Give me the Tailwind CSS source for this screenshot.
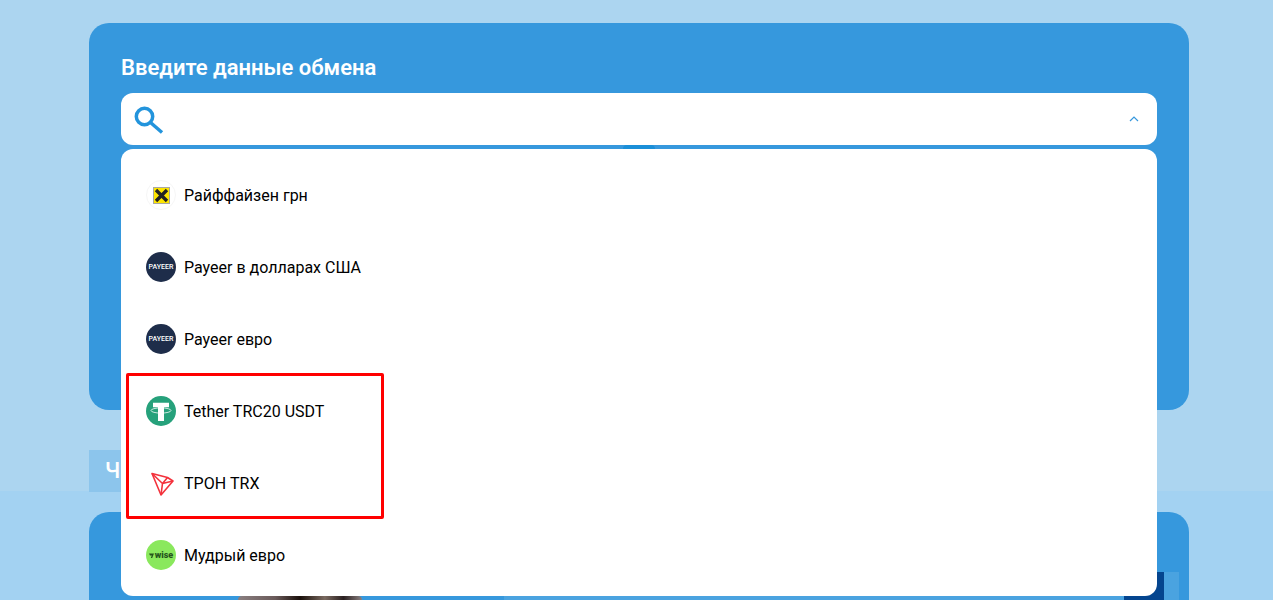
<!DOCTYPE html>
<html lang="ru">
<head>
  <meta charset="UTF-8" />
  <meta name="viewport" content="width=device-width, initial-scale=1" />
  <title>Обмен</title>
  <script src="https://cdn.jsdelivr.net/npm/@tailwindcss/browser@4"></script>
</head>

<body class="h-[600px] overflow-hidden bg-[#a3d2f2] font-['Roboto',sans-serif]">

  <div class="relative h-[600px] overflow-hidden">

    <!-- Top band of the page background -->
    <div class="h-[491px] bg-[#acd5f0] pt-[23px]">
      <div class="ml-[89px] w-[1100px]">

        <!-- Exchange card -->
        <div class="h-[387px] rounded-[20px] bg-[#3698dd] px-8 pt-8">
          <h2 class="text-[22px] leading-[26px] font-semibold text-white">Введите данные обмена</h2>

          <div class="mt-[12px] flex h-[52px] items-center justify-between rounded-[12px] bg-white pl-[13px] pr-[18px]">
            <svg class="h-[30px] w-[30px]" viewBox="0 0 30 30" fill="none" stroke="#2394dc" stroke-width="3.5">
              <circle cx="10.5" cy="12.5" r="8.2" />
              <path d="M16.5 18.5 L28 28.5" />
            </svg>
            <svg class="h-[8px] w-[10px]" viewBox="0 0 10 8" fill="none" stroke="#3698dd" stroke-width="1.2">
              <path d="M1 6 L5 2 L9 6" />
            </svg>
          </div>

          <div class="mx-auto h-[4px] w-[32px] rounded-t-full bg-[#1a8fd8]"></div>
        </div>

        <!-- Tab under the card -->
        <div class="mt-10 h-[42px] w-[200px] bg-[#8cc5ec] pl-4 text-[22px] leading-[42px] font-medium text-white">Ч</div>
      </div>
    </div>

    <!-- Second card, cut off by the window -->
    <div class="ml-[89px] mt-[21px] h-[120px] w-[1100px] rounded-t-[20px] bg-[#3698dd] pt-[60px]">
      <div class="flex h-[28px] items-end pl-[149px]">
        <!-- Top of the photo that shows under the dropdown -->
        <div class="h-[4px] w-[124px] rounded-t-full bg-[linear-gradient(90deg,#8a7f80,#6a5a5a_30%,#1a0f0a_50%,#7a6a60_70%,#2a2020_85%,#8a8080)]"></div>
        <div class="ml-[142px] h-[4px] w-[620px] bg-[#4aa3e0]"></div>
        <div class="h-[28px] w-[40px] bg-[#04458f]"></div>
        <div class="h-[28px] w-[15px] bg-[#4aa3e0]"></div>
      </div>
    </div>

    <!-- Open dropdown -->
    <ul class="absolute left-[121px] top-[149px] h-[447px] w-[1036px] rounded-[12px] bg-white pt-[10px] text-[16px] text-black">
      <li class="flex h-[72px] items-center gap-2 pl-[25px]">
        <span class="flex h-[30px] w-[30px] items-center justify-center rounded-full border border-[#f6f6f6] bg-white">
          <svg class="h-[17px] w-[17px]" viewBox="0 0 17 17">
            <rect x="0.5" y="0.5" width="16" height="16" fill="#fde500" stroke="#a8a8a0" stroke-width="1" />
            <path d="M3 3 L14 14 M14 3 L3 14" stroke="#222" stroke-width="3.4" />
          </svg>
        </span>
        <span class="pt-[2px]">Райффайзен грн</span>
      </li>
      <li class="flex h-[72px] items-center gap-2 pl-[25px]">
        <span class="flex h-[30px] w-[30px] items-center justify-center rounded-full bg-[#1e2d4a] text-[7px] font-medium text-white">PAYEER</span>
        <span class="pt-[2px]">Payeer в долларах США</span>
      </li>
      <li class="flex h-[72px] items-center gap-2 pl-[25px]">
        <span class="flex h-[30px] w-[30px] items-center justify-center rounded-full bg-[#1e2d4a] text-[7px] font-medium text-white">PAYEER</span>
        <span class="pt-[2px]">Payeer евро</span>
      </li>
      <li class="flex h-[72px] items-center gap-2 pl-[25px]">
        <svg class="h-[30px] w-[30px]" viewBox="0 0 30 30">
          <circle cx="15" cy="15" r="15" fill="#26a17b" />
          <ellipse cx="15" cy="14.5" rx="10" ry="2.6" fill="none" stroke="#fff" stroke-opacity="0.75" stroke-width="1" />
          <path d="M7 6.8 H23 V11.3 H18 V25 H12 V11.3 H7 Z" fill="#fff" />
        </svg>
        <span class="pt-[2px]">Tether TRC20 USDT</span>
      </li>
      <li class="flex h-[72px] items-center gap-2 pl-[25px]">
        <svg class="h-[30px] w-[30px]" viewBox="0 0 30 30" fill="none" stroke="#f3323c" stroke-width="1.6" stroke-linejoin="round">
          <path d="M6 5.5 L21.5 9.5 L27 13 L15 27 Z" />
          <path d="M6 5.5 L16.5 15.5 L15 27 M16.5 15.5 L27 13 M16.5 15.5 L21.5 9.5" />
        </svg>
        <span class="pt-[2px]">ТРОН TRX</span>
      </li>
      <li class="flex h-[72px] items-center gap-2 pl-[25px]">
        <span class="flex h-[30px] w-[30px] items-center justify-center gap-px rounded-full bg-[#8ae85d] text-[9px] leading-none font-black text-[#25551c]">
          <svg class="h-[5px] w-[5px]" viewBox="0 0 5 5" fill="#25551c">
            <path d="M0 0.5 H5 L3.2 5 H1.8 L2.8 2.4 H1 Z" />
          </svg>
          wise
        </span>
        <span class="pt-[2px]">Мудрый евро</span>
      </li>
    </ul>

    <!-- Red highlight drawn over the screenshot -->
    <div class="absolute left-[126px] top-[373px] h-[146px] w-[258px] rounded-[2px] border-[3px] border-[#ff0000]"></div>
  </div>

</body>
</html>
